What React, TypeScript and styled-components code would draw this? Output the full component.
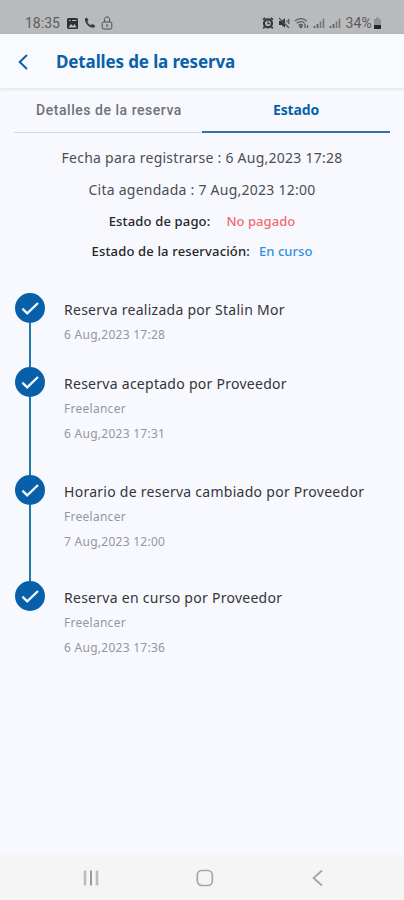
import React from "react";
import styled, { createGlobalStyle, css } from "styled-components";

const BLUE = "#0961a9";

const GlobalStyle = createGlobalStyle`
  *, *::before, *::after { box-sizing: border-box; }
  body { margin: 0; background: #f8f9fe; font-family: "Noto Sans", sans-serif; }
`;

const Screen = styled.div`
  display: flex;
  flex-direction: column;
  height: 900px;
  width: 100%;
  background: #f8f9fe;
  overflow: hidden;
`;

const StatusBar = styled.div`
  display: flex;
  flex: none;
  justify-content: space-between;
  height: 34px;
  padding: 13px 22px 0 25px;
  background: #b9babc;
  color: #5a5b5d;
  font: 14px/20px Roboto, sans-serif;
`;

const StatusGroup = styled.div<{ $gap: number }>`
  display: flex;
  align-items: center;
  height: 20px;
  gap: ${(p) => p.$gap}px;
`;

const Clock = styled.span`
  width: 36px;
  white-space: nowrap;
`;

const Battery = styled.span`
  display: flex;
  align-items: center;
  gap: 1px;
  letter-spacing: 0.2px;
`;

const Header = styled.header`
  display: flex;
  flex: none;
  align-items: center;
  height: 54px;
  padding: 1px 0 0 16px;
  background: #f9fafe;
  box-shadow: 0 1px 4px rgba(40, 50, 70, 0.13);
`;

const BackButton = styled.button`
  display: flex;
  width: 40px;
  padding: 0;
  border: 0;
  background: none;
  color: ${BLUE};
`;

const Title = styled.h1`
  margin: 0;
  padding-top: 1px;
  color: ${BLUE};
  font-size: 17px;
  font-weight: 700;
  line-height: 24px;
  letter-spacing: -0.13px;
`;

const Tabs = styled.nav`
  display: grid;
  flex: none;
  grid-template-columns: 1fr 1fr;
  height: 45px;
  margin: 0 14px;
`;

const Tab = styled.button<{ $active?: boolean }>`
  height: 45px;
  padding: 0;
  border: 0;
  background: none;
  white-space: nowrap;
  ${(p) =>
    p.$active
      ? css`
          border-bottom: 2px solid #2f72a9;
          color: ${BLUE};
          font: 700 14px/43px "Noto Sans", sans-serif;
          letter-spacing: -0.15px;
        `
      : css`
          padding-left: 2px;
          border-bottom: 1px solid #c3dfec;
          color: #707175;
          font: 500 14px/43px Roboto, sans-serif;
          letter-spacing: 0.53px;
        `}
`;

const Summary = styled.section`
  display: flex;
  flex: none;
  flex-direction: column;
  align-items: center;
  padding-top: 9px;
`;

const SummaryLine = styled.p`
  margin: 0;
  color: #4c4d51;
  font-size: 14px;
  line-height: 32px;
  letter-spacing: 0.25px;
  white-space: pre;
`;

const StateLine = styled.p<{ $gap: number }>`
  display: flex;
  gap: ${(p) => p.$gap}px;
  margin: 0;
  color: #242528;
  font-size: 13px;
  font-weight: 500;
  line-height: 30px;
  letter-spacing: 0.16px;
`;

const StateValue = styled.span<{ $color: string }>`
  color: ${(p) => p.$color};
  letter-spacing: 0.05px;
`;

const Timeline = styled.ol`
  display: flex;
  flex-direction: column;
  margin: 27px 0 0;
  padding: 0 15px;
  list-style: none;
`;

const Step = styled.li<{ $height: number }>`
  display: grid;
  grid-template-columns: 30px 1fr;
  column-gap: 19px;
  height: ${(p) => p.$height}px;
`;

const Rail = styled.div`
  display: flex;
  flex-direction: column;
  align-items: center;
`;

const Marker = styled.span`
  display: flex;
  flex: none;
  align-items: center;
  justify-content: center;
  width: 30px;
  height: 30px;
  border-radius: 50%;
  background: #0860a8;
`;

const Connector = styled.span`
  flex: 1;
  width: 2px;
  background: #2078ac;
`;

const StepBody = styled.div`
  padding-top: 4px;
  white-space: nowrap;
`;

const StepTitle = styled.h2`
  margin: 0;
  color: #343539;
  font-size: 14px;
  font-weight: 400;
  line-height: 25px;
  letter-spacing: 0.27px;
`;

const StepMeta = styled.p`
  margin: 0;
  color: #93979f;
  font-size: 12px;
  line-height: 25px;
  letter-spacing: 0.27px;
`;

const NavBar = styled.footer`
  display: flex;
  flex: none;
  align-items: center;
  justify-content: space-between;
  height: 45px;
  margin-top: auto;
  padding: 0 74px 0 79px;
  background: #f5f5f5;
`;

const ImageIcon = () => (
  <svg width="13" height="13" viewBox="0 0 13 13">
    <rect x="1" y="1" width="11" height="11" rx="1.5" fill="#303133" />
    <path d="M2.5 10.5 5 7l2 2 1.6-2 2 3.5z" fill="#b9babc" />
    <path d="M3 3.5h1.5M6 3.5h4.5" stroke="#b9babc" />
  </svg>
);

const PhoneIcon = () => (
  <svg width="12" height="12" viewBox="0 0 12 12">
    <path d="M1 1.2 3.2.8l1.2 2.8-1.2 1.2c.8 1.5 1.9 2.7 3.5 3.5L8 7l3 1.3-.4 2.3C5.6 11.6.3 6.2 1 1.2z" fill="#3b3c3e" />
  </svg>
);

const LockIcon = () => (
  <svg width="12" height="14" viewBox="0 0 12 14" fill="none" stroke="#4b4c4e">
    <path d="M3.4 6V3.5C3.4 0 8.6 0 8.6 3.5V6" />
    <rect x="1.2" y="6" width="9.6" height="7" rx="1.5" />
    <path d="M6 8.3v2.4" strokeWidth="1.3" />
  </svg>
);

const AlarmIcon = () => (
  <svg width="12" height="12" viewBox="0 0 12 12" fill="none" stroke="#343537">
    <path d="M1 2.6 3.2.9M11 2.6 8.8.9M2.5 10 1.2 11.4M9.5 10l1.3 1.4" strokeWidth="1.8" />
    <circle cx="6" cy="6.3" r="4" strokeWidth="2.2" />
    <path d="M6 4v2.6h1.8" strokeWidth="1.1" />
  </svg>
);

const MuteIcon = () => (
  <svg width="12" height="12" viewBox="0 0 12 12">
    <path d="M1 4h2.6L7 1.2v9.6L3.6 8H1z" fill="#343537" />
    <path d="m1 1 10 10M9 3.2v2.2M9 8v1.2M10.8 2v5" stroke="#505153" strokeWidth="1.2" fill="none" />
  </svg>
);

const WifiIcon = () => (
  <svg width="15" height="12" viewBox="0 0 15 12" fill="none" stroke="#57585a" strokeWidth="1.2">
    <path d="M.8 4.2c3.4-3.4 8.6-3.4 12 0M2.8 6.3c2.3-2.2 5.8-2.2 8 0M4.8 8.3c1.2-1.1 2.9-1.1 4 0" />
    <path d="M5.5 9h2.6L6.8 10.8zM11 7v4M13.5 8v3" fill="#57585a" />
  </svg>
);

const SignalIcon = () => (
  <svg width="12" height="12" viewBox="0 0 12 12" stroke="#58595b" strokeWidth="1.6">
    <path d="M1.5 9v2M4.5 7v4" />
    <path d="M7.5 4.5V11M10.5 1.5V11" stroke="#737476" />
  </svg>
);

const BatteryIcon = () => (
  <svg width="9" height="13" viewBox="0 0 9 13">
    <path d="M3 .5h3V2h2v6H1V2h2z" fill="#929395" />
    <path d="M1 8h7v4H1z" fill="#252628" />
  </svg>
);

const ChevronIcon = () => (
  <svg width="14" height="18" viewBox="0 0 14 18" fill="none" stroke="currentColor" strokeWidth="2">
    <path d="M11 2 3.7 9l7.3 7" />
  </svg>
);

const CheckIcon = () => (
  <svg width="20" height="16" viewBox="0 0 20 16" fill="none" stroke="#f4f9ff" strokeWidth="2.3">
    <path d="m2.4 8.7 4.8 4.6L18 3" />
  </svg>
);

const RecentsIcon = () => (
  <svg width="24" height="24" viewBox="0 0 24 24" fill="none" strokeWidth="2">
    <path d="M6 4.5v15M18 4.5v15" stroke="#bcbcbc" strokeWidth="2.6" />
    <path d="M12 4.5v15" stroke="#999" />
  </svg>
);

const HomeIcon = () => (
  <svg width="24" height="24" viewBox="0 0 24 24" fill="none" stroke="#a6a6a6" strokeWidth="1.7">
    <rect x="4.3" y="4.5" width="15" height="15" rx="4.5" />
  </svg>
);

const NavBackIcon = () => (
  <svg width="24" height="24" viewBox="0 0 24 24" fill="none" stroke="#a3a3a3" strokeWidth="1.7">
    <path d="m16 4.5-8.5 7.5 8.5 7.5" />
  </svg>
);

const steps = [
  { title: "Reserva realizada por Stalin Mor", meta: ["6 Aug,2023 17:28"], height: 74 },
  { title: "Reserva aceptado por Proveedor", meta: ["Freelancer", "6 Aug,2023 17:31"], height: 108 },
  { title: "Horario de reserva cambiado por Proveedor", meta: ["Freelancer", "7 Aug,2023 12:00"], height: 106 },
  { title: "Reserva en curso por Proveedor", meta: ["Freelancer", "6 Aug,2023 17:36"], height: 84 },
];

export default function App() {
  return (
    <Screen>
      <GlobalStyle />
      <StatusBar>
        <StatusGroup $gap={5}>
          <Clock>18:35</Clock>
          <ImageIcon />
          <PhoneIcon />
          <LockIcon />
        </StatusGroup>
        <StatusGroup $gap={4}>
          <AlarmIcon />
          <MuteIcon />
          <WifiIcon />
          <SignalIcon />
          <SignalIcon />
          <Battery>
            34%
            <BatteryIcon />
          </Battery>
        </StatusGroup>
      </StatusBar>
      <Header>
        <BackButton aria-label="Volver">
          <ChevronIcon />
        </BackButton>
        <Title>Detalles de la reserva</Title>
      </Header>
      <Tabs>
        <Tab>Detalles de la reserva</Tab>
        <Tab $active>Estado</Tab>
      </Tabs>
      <Summary>
        <SummaryLine>Fecha para registrarse : 6 Aug,2023 17:28</SummaryLine>
        <SummaryLine>Cita agendada : 7 Aug,2023 12:00</SummaryLine>
        <StateLine $gap={16}>
          Estado de pago:
          <StateValue $color="#f3696f">No pagado</StateValue>
        </StateLine>
        <StateLine $gap={9}>
          Estado de la reservación:
          <StateValue $color="#2f8fe3">En curso</StateValue>
        </StateLine>
      </Summary>
      <Timeline>
        {steps.map((step, i) => (
          <Step key={step.title} $height={step.height}>
            <Rail>
              <Marker>
                <CheckIcon />
              </Marker>
              {i < steps.length - 1 && <Connector />}
            </Rail>
            <StepBody>
              <StepTitle>{step.title}</StepTitle>
              {step.meta.map((line) => (
                <StepMeta key={line}>{line}</StepMeta>
              ))}
            </StepBody>
          </Step>
        ))}
      </Timeline>
      <NavBar>
        <RecentsIcon />
        <HomeIcon />
        <NavBackIcon />
      </NavBar>
    </Screen>
  );
}
